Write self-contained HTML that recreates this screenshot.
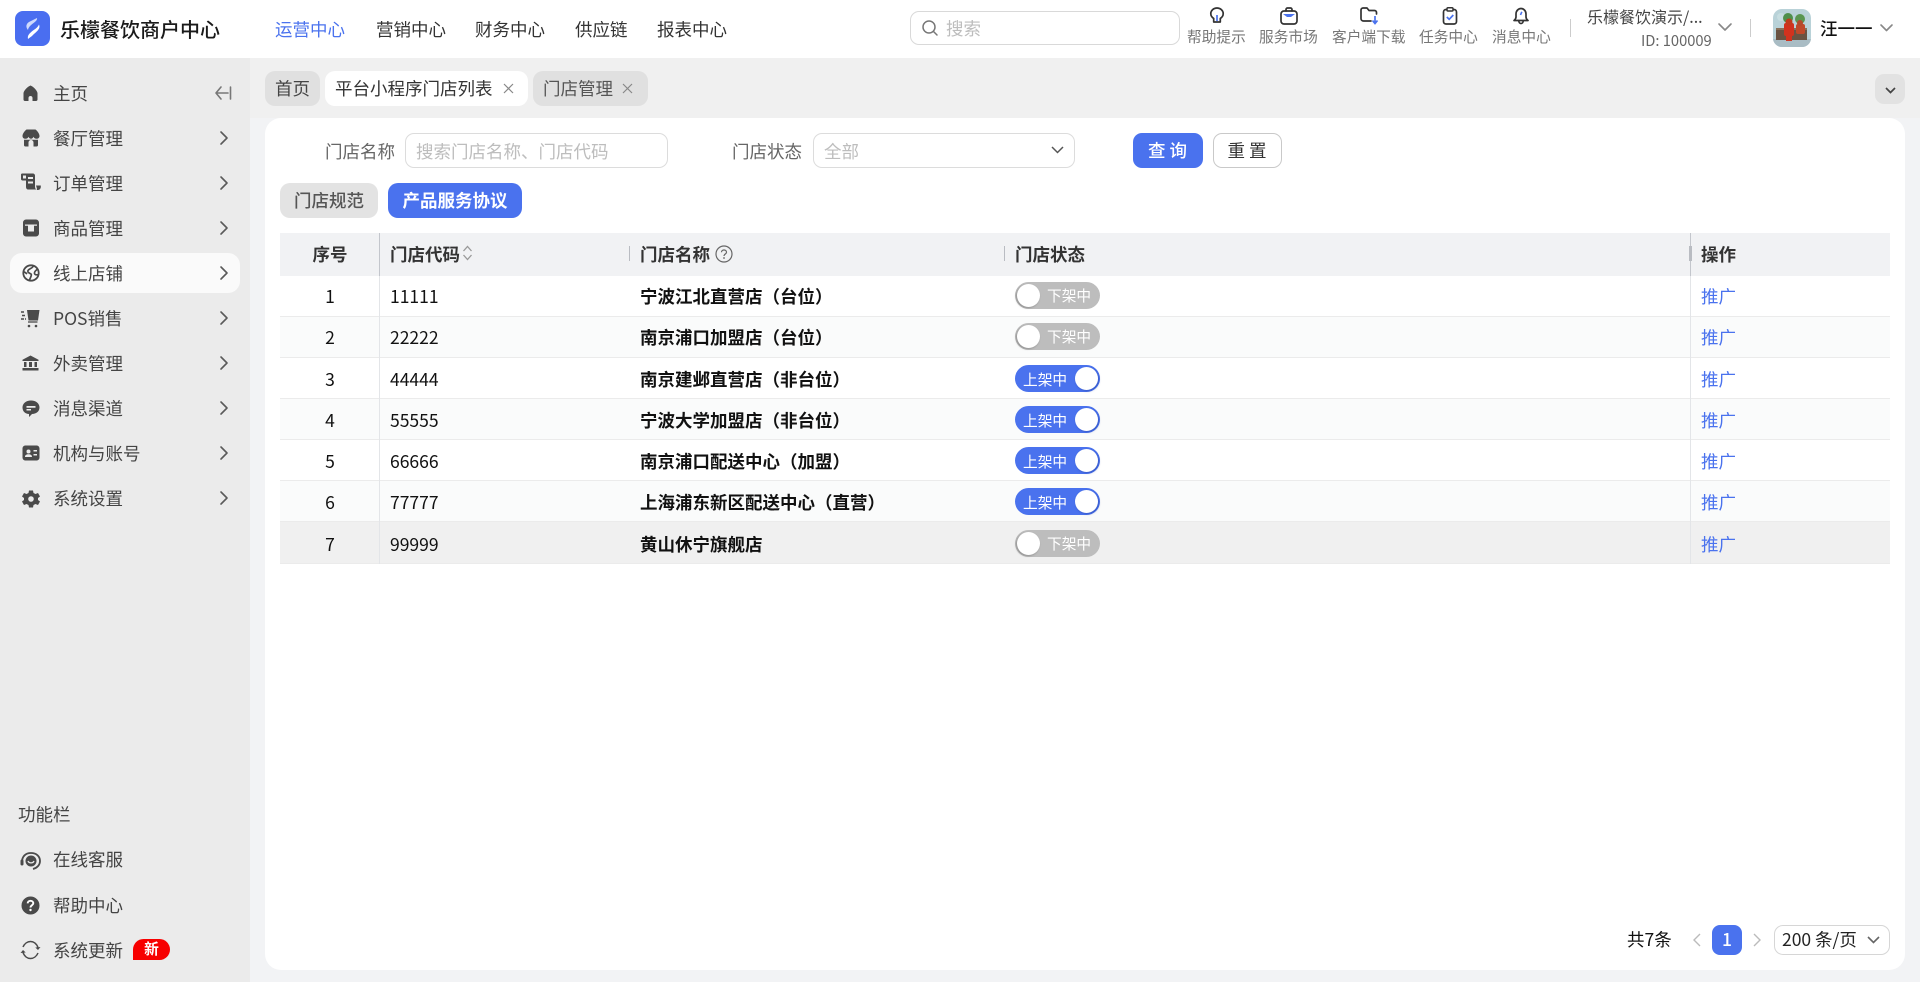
<!DOCTYPE html>
<html lang="zh-CN"><head><meta charset="utf-8"><title>平台小程序门店列表</title>
<style>
*{box-sizing:border-box}
html,body{margin:0;padding:0}
body{width:1920px;height:982px;overflow:hidden;position:relative;background:#f0f0f0;font-family:"Noto Sans CJK SC","Liberation Sans",sans-serif;font-size:17.5px;color:#333}
.a{position:absolute}
.t{position:absolute;white-space:nowrap;line-height:24px;height:24px}
svg{position:absolute;display:block;overflow:visible}
.side{color:#444}
.chev{fill:none;stroke:#5a5a5a;stroke-width:1.6;stroke-linecap:round;stroke-linejoin:round}
.hl{font-size:14.7px;color:#777}
.ic{fill:none;stroke:#333;stroke-width:1.7;stroke-linecap:round;stroke-linejoin:round}
.sw{position:absolute;left:1015px;width:85px;height:27px;border-radius:14px;color:#fff;font-size:14.7px;line-height:27px}
.sw i{position:absolute;top:2px;width:23px;height:23px;background:#fff;border-radius:50%;display:block}
.off{background:#bdbdbd}.off i{left:2px;box-shadow:-1px 1px 2px rgba(0,0,0,.25)}.off span{position:absolute;left:32px}
.on{background:#4a72ee}.on i{right:2px;box-shadow:1px 1px 2px rgba(30,60,160,.5)}.on span{position:absolute;left:8px;top:1px}
.b{font-weight:700;color:#111}
.n{color:#111}
.lk{color:#4a72ee}
.row{position:absolute;left:280px;width:1610px;border-bottom:1px solid #ebebeb}
.c{text-align:center;width:100px;left:280px}
</style></head><body>

<!-- Header -->
<div class="a" style="left:0;top:0;width:1920px;height:58px;background:#fff"></div>
<div class="a" style="left:15px;top:11px;width:35px;height:35px;border-radius:8px;background:#4a6ef0"></div>
<svg style="left:15px;top:11px" width="35" height="35" viewBox="0 0 35 35"><path d="M22 7 C23 11 14 13 13 19 C10.500 16 11 13 14 11 Z" fill="#cfdafc"/><path d="M24 13.500 C26 18 21 21 18 24 C16 26 14 27 13 28 C12 24 15 22 18 19.500 C20.500 18 23 16 24 13.500 Z" fill="#fff"/></svg>
<div class="t" style="left:60px;top:17px;font-size:20px;font-weight:500;color:#1a1a1a">乐檬餐饮商户中心</div>
<div class="t" style="left:275px;top:18px;color:#4a72ee">运营中心</div>
<div class="t" style="left:376px;top:18px">营销中心</div>
<div class="t" style="left:475px;top:18px">财务中心</div>
<div class="t" style="left:575px;top:18px">供应链</div>
<div class="t" style="left:657px;top:18px">报表中心</div>

<div class="a" style="left:910px;top:11px;width:270px;height:34px;border:1px solid #d9d9d9;border-radius:9px;background:#fff"></div>
<svg style="left:921px;top:19px" width="18" height="18" viewBox="0 0 18 18"><circle cx="8" cy="8" r="6" fill="none" stroke="#777" stroke-width="1.500"/><path d="M12.500 12.500 16 16" stroke="#777" stroke-width="1.500" stroke-linecap="round"/></svg>
<div class="t" style="left:946px;top:17px;color:#bdbdbd">搜索</div>

<!-- Header icons -->
<svg style="left:1208px;top:7px" width="18" height="18" viewBox="0 0 18 18"><path class="ic" d="M5.700 11.500C3.900 10.300 2.800 8.500 2.800 6.600 2.800 3.400 5.600 1 9 1s6.200 2.400 6.200 5.600c0 1.900-1.100 3.700-2.900 4.900V15H5.700Z"/><path d="M9 8v6" stroke="#4a72ee" stroke-width="1.700"/></svg>
<svg style="left:1280px;top:7px" width="18" height="18" viewBox="0 0 18 18"><rect class="ic" x="1" y="4" width="16" height="13" rx="3"/><path class="ic" d="M6 4V2.500C6 1.700 6.700 1 7.500 1h3c.8 0 1.500.7 1.500 1.500V4"/><path d="M3 7h12l-4 3H7Z" fill="#4a72ee"/></svg>
<svg style="left:1360px;top:7px" width="20" height="18" viewBox="0 0 20 18"><path class="ic" d="M11 14H3.500C2.100 14 1 12.900 1 11.500V3c0-1.100.9-2 2-2h4l2 2.500h5.500c1.200 0 2 .9 2 2V7"/><path d="M15 9v7M12.500 13.500 15 16.500l2.500-3" fill="none" stroke="#4a72ee" stroke-width="1.700"/></svg>
<svg style="left:1441px;top:7px" width="18" height="18" viewBox="0 0 18 18"><rect class="ic" x="2.500" y="2.500" width="13" height="14.500" rx="2.500"/><rect x="6" y="0.700" width="6" height="3.300" rx="1" fill="#fff" stroke="#333" stroke-width="1.500"/><path d="M5.800 10 8.200 12.300 12.300 8" fill="none" stroke="#4a72ee" stroke-width="1.700"/></svg>
<svg style="left:1512px;top:7px" width="18" height="18" viewBox="0 0 18 18"><path class="ic" d="M2 13.500c1.300-1 2-2 2-3.500V7c0-3 2.200-5.500 5-5.500S14 4 14 7v3c0 1.500.7 2.500 2 3.500Z"/><path class="ic" d="M6.800 13.700c0 1.700 1 2.800 2.200 2.800s2.200-1.100 2.200-2.800"/><path d="M9.800 4.800 8.500 8" stroke="#4a72ee" stroke-width="1.600"/></svg>
<div class="t hl" style="left:1187px;top:25px">帮助提示</div>
<div class="t hl" style="left:1259px;top:25px">服务市场</div>
<div class="t hl" style="left:1332px;top:25px">客户端下载</div>
<div class="t hl" style="left:1419px;top:25px">任务中心</div>
<div class="t hl" style="left:1492px;top:25px">消息中心</div>
<div class="a" style="left:1570px;top:19px;width:1px;height:18px;background:#ccc"></div>
<div class="t" style="left:1587px;top:4px;font-size:16px;color:#444">乐檬餐饮演示/...</div>
<div class="t" style="left:1641px;top:29px;font-size:14.7px;color:#666">ID: 100009</div>
<svg style="left:1718px;top:23px" width="14" height="9" viewBox="0 0 14 9"><path class="chev" style="stroke:#888" d="M1 1l6 6 6-6"/></svg>
<div class="a" style="left:1750px;top:19px;width:1px;height:18px;background:#ccc"></div>
<svg style="left:1773px;top:9px;overflow:hidden;border-radius:9px" width="38" height="38" viewBox="0 0 38 38"><rect width="38" height="38" fill="#b9d2d8"/><rect y="30" width="38" height="8" fill="#a9bcc4"/><circle cx="8" cy="8" r="4" fill="#c7dde0"/><circle cx="15" cy="9" r="5" fill="#4f8f4a"/><circle cx="27" cy="10" r="5" fill="#5a9650"/><rect x="3" y="21" width="31" height="10" fill="#6a5342"/><rect x="3" y="19" width="31" height="2" fill="#8a7058"/><rect x="11" y="14" width="10" height="13" rx="2" fill="#d2321e"/><circle cx="16" cy="13" r="3.500" fill="#c23a1c"/><rect x="23" y="15" width="9" height="10" rx="2" fill="#c0492a"/><circle cx="27" cy="14" r="3" fill="#b44a2a"/><rect x="13" y="27" width="6" height="5" fill="#d2321e"/></svg>
<div class="t" style="left:1820px;top:17px;color:#111;font-weight:500">汪一一</div>
<svg style="left:1880px;top:24px" width="13" height="8" viewBox="0 0 13 8"><path class="chev" style="stroke:#888" d="M1 1l5.500 5.500L12 1"/></svg>

<!-- Sidebar -->
<div class="a" style="left:0;top:58px;width:250px;height:924px;background:#ebebeb"></div>
<div class="a" style="left:250px;top:118px;width:1670px;height:864px;background:#f2f3f5"></div>
<div class="a" style="left:10px;top:253px;width:230px;height:40px;border-radius:12px;background:#fafafa"></div>

<div class="side">
<div class="t" style="left:53px;top:82px">主页</div>
<div class="t" style="left:53px;top:127px">餐厅管理</div>
<div class="t" style="left:53px;top:172px">订单管理</div>
<div class="t" style="left:53px;top:217px">商品管理</div>
<div class="t" style="left:53px;top:262px">线上店铺</div>
<div class="t" style="left:53px;top:307px">POS销售</div>
<div class="t" style="left:53px;top:352px">外卖管理</div>
<div class="t" style="left:53px;top:397px">消息渠道</div>
<div class="t" style="left:53px;top:442px">机构与账号</div>
<div class="t" style="left:53px;top:487px">系统设置</div>
<div class="t" style="left:18px;top:803px">功能栏</div>
<div class="t" style="left:53px;top:848px">在线客服</div>
<div class="t" style="left:53px;top:894px">帮助中心</div>
<div class="t" style="left:53px;top:939px">系统更新</div>
</div>
<div class="t" style="left:133px;top:939px;width:37px;height:21px;line-height:20px;background:#f70000;color:#fff;font-weight:700;font-size:14.7px;text-align:center;border-radius:11px 11px 11px 0">新</div>

<!-- Sidebar icons -->
<svg style="left:22px;top:85px" width="17" height="17" viewBox="0 0 17 17"><path fill="#4a4a4a" d="M8.500 0.500C11 1.500 15 5 15.500 8V14.500C15.500 15.500 14.800 16 14 16H10.500V13C10.500 11.800 9.600 11 8.500 11S6.500 11.800 6.500 13V16H3C2.200 16 1.500 15.500 1.500 14.500V8C2 5 6 1.500 8.500 .5Z"/></svg>
<svg style="left:215px;top:86px" width="17" height="14" viewBox="0 0 17 14"><path class="chev" style="stroke:#777" d="M6 1 1 7l5 6M1 7h12M15.500 1v12"/></svg>
<svg style="left:22px;top:129px" width="18" height="18" viewBox="0 0 18 18"><path fill="#4a4a4a" d="M4.500.5H13.500C15 1.500 17.500 4.500 17.500 7 17.500 9 16 9.800 14.500 9.800 13 9.800 12 9 11.500 7.800 11 9 10 9.800 9 9.800S7 9 6.500 7.800C6 9 5 9.800 3.500 9.800 2 9.800 .5 9 .5 7 .5 4.500 3 1.500 4.500 .5Z"/><path fill="#4a4a4a" fill-rule="evenodd" d="M2 10.800H16V16a1.500 1.500 0 0 1-1.500 1.500h-11A1.500 1.500 0 0 1 2 16ZM6.500 13.500v4h5v-4a2.500 2.500 0 0 0-5 0Z"/></svg>
<svg style="left:21px;top:173px" width="20" height="19" viewBox="0 0 20 19"><path fill="#4a4a4a" fill-rule="evenodd" d="M1 0.500H12C13 .5 14 1.500 14 2.500V13.500C14 15 14.800 16.500 15.500 16.500H7C6 16.500 5 15.500 5 14V7.500H1.500C.7 7.500 0 6.800 0 6V1.500C0 1 .5 .5 1 .5ZM2 2.500V5.500H5V2.500ZM7 4V6H12V4ZM7 8.500V10.500H12V8.500Z"/><path fill="#4a4a4a" d="M15 12.500H19.800V14C19.800 15.500 18.500 17 17 17H15.800C16.300 16 15.500 14 15 12.500Z"/></svg>
<svg style="left:23px;top:219px" width="16" height="18" viewBox="0 0 16 18"><path fill="#4a4a4a" fill-rule="evenodd" d="M3 .5H13C14.500 .5 16 2 16 3.500V14.500C16 16 14.500 17.500 13 17.500H3C1.500 17.500 0 16 0 14.500V3.500C0 2 1.500 .5 3 .5ZM2 5.500V6.800H5V12.500H11V6.800H14V5.500Z"/></svg>
<svg style="left:22px;top:264px" width="18" height="18" viewBox="0 0 18 18"><circle cx="9" cy="9" r="7.700" fill="none" stroke="#4a4a4a" stroke-width="1.800"/><path fill="none" stroke="#4a4a4a" stroke-width="1.700" d="M11.500 1.800C10 5 7 4.500 6 6.500 5 8.500 7.500 9 9 10 10 10.800 8.500 13.500 7.500 16M2 8C3 8 4 9 5 10M15.500 5C14 6.500 12 7.500 12.500 9.500 13 11 15 11 16.500 10.500"/></svg>
<svg style="left:20px;top:309px" width="20" height="19" viewBox="0 0 20 19"><path fill="#4a4a4a" d="M7 1H19.500L18 11.500H8.500Z"/><path d="M1 3H5M2 6.500H6M1 10H6" stroke="#4a4a4a" stroke-width="1.600" stroke-dasharray="3 1" fill="none"/><path d="M8 13H17.500" stroke="#4a4a4a" stroke-width="1.300"/><circle cx="9" cy="17" r="1.300" fill="#4a4a4a"/><circle cx="16" cy="17" r="1.300" fill="#4a4a4a"/></svg>
<svg style="left:22px;top:355px" width="17" height="16" viewBox="0 0 17 16"><path fill="#4a4a4a" d="M8.500 .5 16.500 4.800V6H.5V4.800ZM2 7H4.500V12H2ZM7 7H10V12H7ZM12.500 7H15V12H12.500ZM.5 13H16.500V15.500H.5Z"/></svg>
<svg style="left:22px;top:400px" width="18" height="18" viewBox="0 0 18 18"><path fill="#4a4a4a" fill-rule="evenodd" d="M9 .5C14 .5 17.500 3.500 17.500 7.500S14 14 10 14L7 17V14C3.500 14 .5 11.500 .5 7.500S4 .5 9 .5ZM4.500 6V7.700H13.500V6ZM4.500 9V10.500H9V9Z"/></svg>
<svg style="left:22px;top:445px" width="18" height="16" viewBox="0 0 18 16"><path fill="#4a4a4a" fill-rule="evenodd" d="M3.500 .5H14.500C16.200 .5 17.500 1.800 17.500 3.500V12.500C17.500 14.200 16.200 15.500 14.500 15.500H3.500C1.800 15.500 .5 14.200 .5 12.500V3.500C.5 1.800 1.800 .5 3.500 .5ZM6.500 4.500A2 2 0 1 0 6.500 8.500 2 2 0 0 0 6.500 4.500ZM3 12H10C10 10 8.500 9.300 6.500 9.300S3 10 3 12ZM11.500 5V6.500H15V5ZM11.500 9V10.500H15V9Z"/></svg>
<svg style="left:22px;top:490px" width="18" height="18" viewBox="0 0 18 18"><path fill="#4a4a4a" fill-rule="evenodd" d="M7 .5H11L11.500 3 13.500 4 16 3 18 6.500 16 8V10L18 11.500 16 15 13.500 14 11.500 15 11 17.500H7L6.500 15 4.500 14 2 15 0 11.500 2 10V8L0 6.500 2 3 4.500 4 6.500 3ZM9 6.200A2.800 2.800 0 1 0 9 11.800 2.800 2.800 0 0 0 9 6.200Z"/></svg>
<svg style="left:220px;top:131px" width="8" height="14" viewBox="0 0 8 14"><path class="chev" d="M1 1l6 6-6 6"/></svg>
<svg style="left:220px;top:176px" width="8" height="14" viewBox="0 0 8 14"><path class="chev" d="M1 1l6 6-6 6"/></svg>
<svg style="left:220px;top:221px" width="8" height="14" viewBox="0 0 8 14"><path class="chev" d="M1 1l6 6-6 6"/></svg>
<svg style="left:220px;top:266px" width="8" height="14" viewBox="0 0 8 14"><path class="chev" d="M1 1l6 6-6 6"/></svg>
<svg style="left:220px;top:311px" width="8" height="14" viewBox="0 0 8 14"><path class="chev" d="M1 1l6 6-6 6"/></svg>
<svg style="left:220px;top:356px" width="8" height="14" viewBox="0 0 8 14"><path class="chev" d="M1 1l6 6-6 6"/></svg>
<svg style="left:220px;top:401px" width="8" height="14" viewBox="0 0 8 14"><path class="chev" d="M1 1l6 6-6 6"/></svg>
<svg style="left:220px;top:446px" width="8" height="14" viewBox="0 0 8 14"><path class="chev" d="M1 1l6 6-6 6"/></svg>
<svg style="left:220px;top:491px" width="8" height="14" viewBox="0 0 8 14"><path class="chev" d="M1 1l6 6-6 6"/></svg>
<svg style="left:20px;top:851px" width="21" height="20" viewBox="0 0 21 20"><path d="M2 11C2 5.500 5.500 2 11 2S20 5.500 20 10C20 14 17 17 13 18" fill="none" stroke="#4a4a4a" stroke-width="1.800"/><rect x=".5" y="8.500" width="3" height="6" rx="1.500" fill="#4a4a4a"/><circle cx="11" cy="10" r="5.500" fill="#4a4a4a"/><path d="M8 10C9 12.500 13 12.500 14 10" stroke="#ebebeb" stroke-width="1.300" fill="none"/></svg>
<svg style="left:21px;top:896px" width="19" height="19" viewBox="0 0 19 19"><circle cx="9.500" cy="9.500" r="9" fill="#4a4a4a"/><path d="M6.700 7.400C6.700 5.800 8 4.800 9.500 4.800S12.300 5.700 12.300 7.300C12.300 9.300 9.500 9.300 9.500 11.500" fill="none" stroke="#fff" stroke-width="1.900"/><circle cx="9.500" cy="14" r="1.200" fill="#fff"/></svg>
<svg style="left:20px;top:940px" width="21" height="20" viewBox="0 0 21 20"><path d="M3 7C4.500 3.500 7.500 1.500 10.500 1.500 13.500 1.500 16.500 3.500 18 7.500M18 13C16.500 16.500 13.500 18.500 10.500 18.500 7.500 18.500 4.500 16.500 3 12.500" fill="none" stroke="#4a4a4a" stroke-width="1.500"/><path d="M20.500 7 18 10 15.300 7.500ZM.5 13 3 10 5.700 12.500Z" fill="#4a4a4a"/></svg>

<!-- Tabs -->
<div class="t" style="left:265px;top:71px;width:55px;height:35px;line-height:36px;background:#e0e0e0;border-radius:10px;text-align:center;color:#444">首页</div>
<div class="t" style="left:325px;top:71px;width:203px;height:35px;line-height:36px;background:#fff;border-radius:10px;padding-left:10px;color:#333">平台小程序门店列表</div>
<svg style="left:503px;top:83px" width="11" height="11" viewBox="0 0 11 11"><path d="M1 1l9 9M10 1l-9 9" stroke="#888" stroke-width="1.200"/></svg>
<div class="t" style="left:533px;top:71px;width:115px;height:35px;line-height:36px;background:#e0e0e0;border-radius:10px;padding-left:10px;color:#555">门店管理</div>
<svg style="left:622px;top:83px" width="11" height="11" viewBox="0 0 11 11"><path d="M1 1l9 9M10 1l-9 9" stroke="#888" stroke-width="1.200"/></svg>
<div class="a" style="left:1875px;top:74px;width:30px;height:30px;border-radius:9px;background:#e2e2e2"></div>
<svg style="left:1885px;top:87px" width="11" height="7" viewBox="0 0 11 7"><path d="M1 1l4.500 4.500L10 1" fill="none" stroke="#444" stroke-width="1.700"/></svg>

<!-- Content card -->
<div class="a" style="left:265px;top:118px;width:1640px;height:852px;background:#fff;border-radius:16px"></div>

<div class="t" style="left:325px;top:140px;color:#666">门店名称</div>
<div class="a" style="left:405px;top:133px;width:263px;height:35px;border:1px solid #dcdcdc;border-radius:9px"></div>
<div class="t" style="left:416px;top:140px;color:#bdbdbd">搜索门店名称、门店代码</div>
<div class="t" style="left:732px;top:140px;color:#666">门店状态</div>
<div class="a" style="left:813px;top:133px;width:262px;height:35px;border:1px solid #dcdcdc;border-radius:9px"></div>
<div class="t" style="left:824px;top:140px;color:#bdbdbd">全部</div>
<svg style="left:1051px;top:146px" width="13" height="8" viewBox="0 0 13 8"><path d="M1 1l5.500 5.500L12 1" fill="none" stroke="#555" stroke-width="1.500"/></svg>
<div class="t" style="left:1133px;top:133px;width:70px;height:35px;line-height:36px;background:#4a72ee;border-radius:9px;color:#fff;text-align:center;letter-spacing:4px;font-weight:500;padding-left:3px">查询</div>
<div class="t" style="left:1213px;top:133px;width:69px;height:35px;line-height:34px;border:1px solid #c9c9c9;border-radius:9px;color:#333;text-align:center;letter-spacing:4px;padding-left:3px">重置</div>
<div class="t" style="left:280px;top:183px;width:98px;height:35px;line-height:36px;background:#e3e3e3;border-radius:10px;color:#555;text-align:center;font-weight:500">门店规范</div>
<div class="t" style="left:388px;top:183px;width:134px;height:35px;line-height:36px;background:#4a72ee;border-radius:10px;color:#fff;text-align:center;font-weight:700">产品服务协议</div>

<!-- Table head -->
<div class="a" style="left:280px;top:233px;width:1610px;height:43px;background:#f1f2f4"></div>
<div class="t c" style="top:243px;font-weight:700;color:#333">序号</div>
<div class="t" style="left:390px;top:243px;font-weight:700;color:#333">门店代码</div>
<svg style="left:462px;top:243px" width="11" height="20" viewBox="0 0 11 20"><path d="M1.500 8 5.500 3.500 9.500 8M1.500 12 5.500 16.500 9.500 12" fill="none" stroke="#999" stroke-width="1.300"/></svg>
<div class="t" style="left:640px;top:243px;font-weight:700;color:#333">门店名称</div>
<svg style="left:715px;top:245px" width="18" height="18" viewBox="0 0 18 18"><circle cx="9" cy="9" r="8" fill="none" stroke="#666" stroke-width="1.200"/><path d="M6.500 7.200C6.500 5.800 7.700 5 9 5s2.500.8 2.500 2.200C11.500 9 9 9 9 11" fill="none" stroke="#666" stroke-width="1.200"/><circle cx="9" cy="13" r=".9" fill="#666"/></svg>
<div class="t" style="left:1015px;top:243px;font-weight:700;color:#333">门店状态</div>
<div class="t" style="left:1701px;top:243px;font-weight:700;color:#333">操作</div>
<div class="a" style="left:379px;top:233px;width:1px;height:43px;background:#c3c6cc"></div>
<div class="a" style="left:629px;top:246px;width:1px;height:15px;background:#b9bcc2"></div>
<div class="a" style="left:1004px;top:246px;width:1px;height:15px;background:#b9bcc2"></div>
<div class="a" style="left:1690px;top:233px;width:1px;height:43px;background:#c3c6cc"></div>
<div class="a" style="left:1689px;top:246px;width:3px;height:15px;background:#b9bcc2"></div>

<!-- Rows -->
<div class="row" style="top:276px;height:41px;background:#fff"></div>
<div class="row" style="top:317px;height:41px;background:#fafbfb"></div>
<div class="row" style="top:358px;height:41px;background:#fff"></div>
<div class="row" style="top:399px;height:41px;background:#fafbfb"></div>
<div class="row" style="top:440px;height:41px;background:#fff"></div>
<div class="row" style="top:481px;height:41px;background:#fafbfb"></div>
<div class="row" style="top:522px;height:42px;background:#f0f0f0"></div>
<div class="a" style="left:379px;top:276px;width:1px;height:288px;background:#e3e5e8"></div>
<div class="a" style="left:1690px;top:276px;width:1px;height:288px;background:#e3e5e8"></div>

<div class="t c n" style="top:285px">1</div><div class="t n" style="left:390px;top:285px">11111</div><div class="t b" style="left:640px;top:285px">宁波江北直营店（台位）</div><div class="sw off" style="top:282px"><i></i><span>下架中</span></div><div class="t lk" style="left:1701px;top:285px">推广</div>
<div class="t c n" style="top:326px">2</div><div class="t n" style="left:390px;top:326px">22222</div><div class="t b" style="left:640px;top:326px">南京浦口加盟店（台位）</div><div class="sw off" style="top:323px"><i></i><span>下架中</span></div><div class="t lk" style="left:1701px;top:326px">推广</div>
<div class="t c n" style="top:368px">3</div><div class="t n" style="left:390px;top:368px">44444</div><div class="t b" style="left:640px;top:368px">南京建邺直营店（非台位）</div><div class="sw on" style="top:365px"><span>上架中</span><i></i></div><div class="t lk" style="left:1701px;top:368px">推广</div>
<div class="t c n" style="top:409px">4</div><div class="t n" style="left:390px;top:409px">55555</div><div class="t b" style="left:640px;top:409px">宁波大学加盟店（非台位）</div><div class="sw on" style="top:406px"><span>上架中</span><i></i></div><div class="t lk" style="left:1701px;top:409px">推广</div>
<div class="t c n" style="top:450px">5</div><div class="t n" style="left:390px;top:450px">66666</div><div class="t b" style="left:640px;top:450px">南京浦口配送中心（加盟）</div><div class="sw on" style="top:447px"><span>上架中</span><i></i></div><div class="t lk" style="left:1701px;top:450px">推广</div>
<div class="t c n" style="top:491px">6</div><div class="t n" style="left:390px;top:491px">77777</div><div class="t b" style="left:640px;top:491px">上海浦东新区配送中心（直营）</div><div class="sw on" style="top:488px"><span>上架中</span><i></i></div><div class="t lk" style="left:1701px;top:491px">推广</div>
<div class="t c n" style="top:533px">7</div><div class="t n" style="left:390px;top:533px">99999</div><div class="t b" style="left:640px;top:533px">黄山休宁旗舰店</div><div class="sw off" style="top:530px"><i></i><span>下架中</span></div><div class="t lk" style="left:1701px;top:533px">推广</div>

<!-- Pagination -->
<div class="t n" style="left:1627px;top:928px;color:#111">共7条</div>
<svg style="left:1692px;top:933px" width="9" height="14" viewBox="0 0 9 14"><path d="M8 1 2 7l6 6" fill="none" stroke="#bbb" stroke-width="1.400"/></svg>
<div class="t" style="left:1712px;top:925px;width:30px;height:30px;line-height:30px;background:#4a72ee;border-radius:8px;color:#fff;text-align:center;font-weight:500">1</div>
<svg style="left:1753px;top:933px" width="9" height="14" viewBox="0 0 9 14"><path d="M1 1l6 6-6 6" fill="none" stroke="#bbb" stroke-width="1.400"/></svg>
<div class="a" style="left:1774px;top:925px;width:116px;height:30px;border:1px solid #d6d6d6;border-radius:9px"></div>
<div class="t" style="left:1782px;top:928px;color:#222">200 条/页</div>
<svg style="left:1867px;top:936px" width="13" height="8" viewBox="0 0 13 8"><path d="M1 1l5.500 5.500L12 1" fill="none" stroke="#666" stroke-width="1.600"/></svg>

</body></html>
